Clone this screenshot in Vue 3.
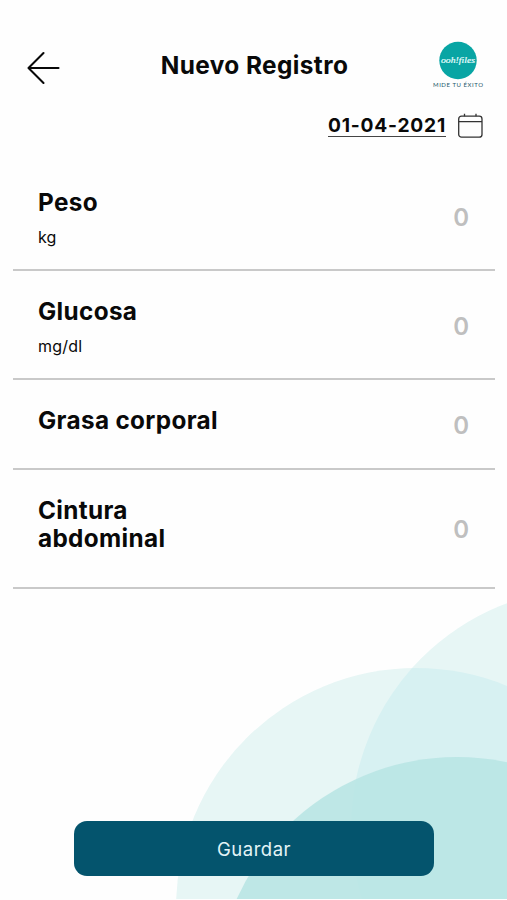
<script setup>
import { ref } from 'vue';

const date = ref('01-04-2021');

// Campos del registro
const fields = ref([
  { key: 'weight', label: 'Peso', unit: 'kg', value: 0 },
  { key: 'glucose', label: 'Glucosa', unit: 'mg/dl', value: 0 },
  { key: 'fat', label: 'Grasa corporal', unit: '', value: 0 },
  { key: 'waist', label: 'Cintura abdominal', unit: '', value: 0 },
]);
</script>

<template>
  <div class="screen">
    <svg class="backdrop" viewBox="0 0 507 310" aria-hidden="true">
      <defs>
        <clipPath id="left-circle">
          <circle cx="416" cy="319" r="240" />
        </clipPath>
      </defs>
      <circle cx="416" cy="319" r="240" fill="#e7f6f5" />
      <circle cx="591" cy="239" r="240" fill="#e7f6f5" />
      <circle cx="591" cy="239" r="240" fill="#d7f1f2" clip-path="url(#left-circle)" />
      <circle cx="457" cy="410" r="242" fill="#b8e5e4" fill-opacity="0.88" />
    </svg>

    <header class="header">
      <button class="back" aria-label="Volver">
        <svg width="34" height="34" viewBox="0 0 34 34">
          <path d="M32.5 17H2.5M17.5 2L2.5 17L17.5 32" />
        </svg>
      </button>
      <h1 class="title">Nuevo Registro</h1>
      <div class="logo">
        <svg width="54" height="50" viewBox="0 0 54 50">
          <circle cx="27" cy="20.5" r="18.7" fill="#08a5a4" />
          <text class="logo-name" x="10" y="22.5" textLength="34" lengthAdjust="spacingAndGlyphs">ooh!files</text>
          <text class="logo-motto" x="2" y="47" textLength="50">MIDE TU ÉXITO</text>
        </svg>
      </div>
    </header>

    <div class="date-row">
      <span class="date">{{ date }}</span>
      <svg class="calendar" width="26" height="26" viewBox="0 0 26 26">
        <rect x="1.7" y="3.2" width="23.3" height="21" rx="2.8" />
        <path d="M1.7 8.6H25M7.5 0.8V3.2M19 0.8V3.2" />
      </svg>
    </div>

    <main class="fields">
      <div v-for="field in fields" :key="field.key" :class="['field', field.key]">
        <div class="info">
          <div class="label">{{ field.label }}</div>
          <div v-if="field.unit" class="unit">{{ field.unit }}</div>
        </div>
        <span class="value">{{ field.value }}</span>
      </div>
    </main>

    <button class="save">Guardar</button>
  </div>
</template>

<style>
body {
  margin: 0;
  background: #fff;
}
</style>

<style scoped>
.screen {
  position: relative;
  display: flex;
  flex-direction: column;
  box-sizing: border-box;
  width: 507px;
  height: 900px;
  padding-bottom: 24px;
  overflow: hidden;
  background: #fefefe;
  color: #090909;
  font-family: Inter, 'Liberation Sans', sans-serif;
}

.backdrop {
  position: absolute;
  left: 0;
  bottom: 1px;
  width: 507px;
  height: 310px;
}

.header {
  display: flex;
  justify-content: space-between;
  height: 54px;
  padding: 40px 22px 0 26px;
}

.back {
  width: 52px;
  height: 34px;
  margin-top: 11px;
  padding: 0;
  border: 0;
  background: none;
  text-align: left;
}

.back svg {
  display: block;
}

.back path {
  fill: none;
  stroke: #080808;
  stroke-width: 2.1;
  stroke-linecap: round;
  stroke-linejoin: round;
}

.title {
  margin: 10px 0 0;
  font-size: 24.4px;
  font-weight: 700;
  line-height: 31px;
  letter-spacing: 0.4px;
  white-space: nowrap;
}

.logo {
  width: 54px;
}

.logo svg {
  display: block;
}

.logo-name {
  fill: #e9ffff;
  stroke: #e9ffff;
  stroke-width: 0.2;
  font-family: 'Liberation Serif', serif;
  font-size: 9px;
  font-style: italic;
}

.logo-motto {
  fill: #24586a;
  font-family: Lato, sans-serif;
  font-size: 6px;
}

.date-row {
  display: flex;
  align-items: flex-start;
  justify-content: flex-end;
  gap: 11px;
  height: 48px;
  padding: 19px 24px 0 0;
}

.date {
  padding-top: 2px;
  border-bottom: 1.5px solid #444;
  font-size: 19.2px;
  font-weight: 700;
  line-height: 21px;
  letter-spacing: 0.8px;
}

.calendar {
  fill: none;
  stroke: #333;
  stroke-width: 1.3;
}

.fields {
  margin: 0 12px 0 13px;
}

.field {
  display: flex;
  align-items: flex-start;
  justify-content: space-between;
  box-sizing: border-box;
  height: 109px;
  padding: 26px 26px 0 25px;
  border-bottom: 2px solid #c9c9c9;
}

.field.weight {
  height: 110px;
  padding-top: 27px;
}

.field.fat {
  height: 90px;
}

.field.waist {
  height: 119px;
}

.info {
  width: 190px;
}

.waist .info {
  width: 140px;
}

.label {
  font-size: 24.3px;
  font-weight: 700;
  line-height: 28px;
  letter-spacing: 0.35px;
}

.unit {
  margin-top: 11px;
  font-size: 16px;
  line-height: 20px;
  letter-spacing: 0.2px;
}

.value {
  padding-top: 16px;
  color: #bfbfbf;
  font-size: 24px;
  font-weight: 600;
  line-height: 28px;
}

.fat .value {
  padding-top: 6px;
}

.waist .value {
  padding-top: 20px;
}

.save {
  position: relative;
  width: 360px;
  height: 55px;
  margin: auto 0 0 74px;
  padding: 0;
  border: 0;
  border-radius: 13px;
  background: #04546d;
  color: #e3f4f7;
  font-family: inherit;
  font-size: 18.5px;
  letter-spacing: 0.5px;
}
</style>
